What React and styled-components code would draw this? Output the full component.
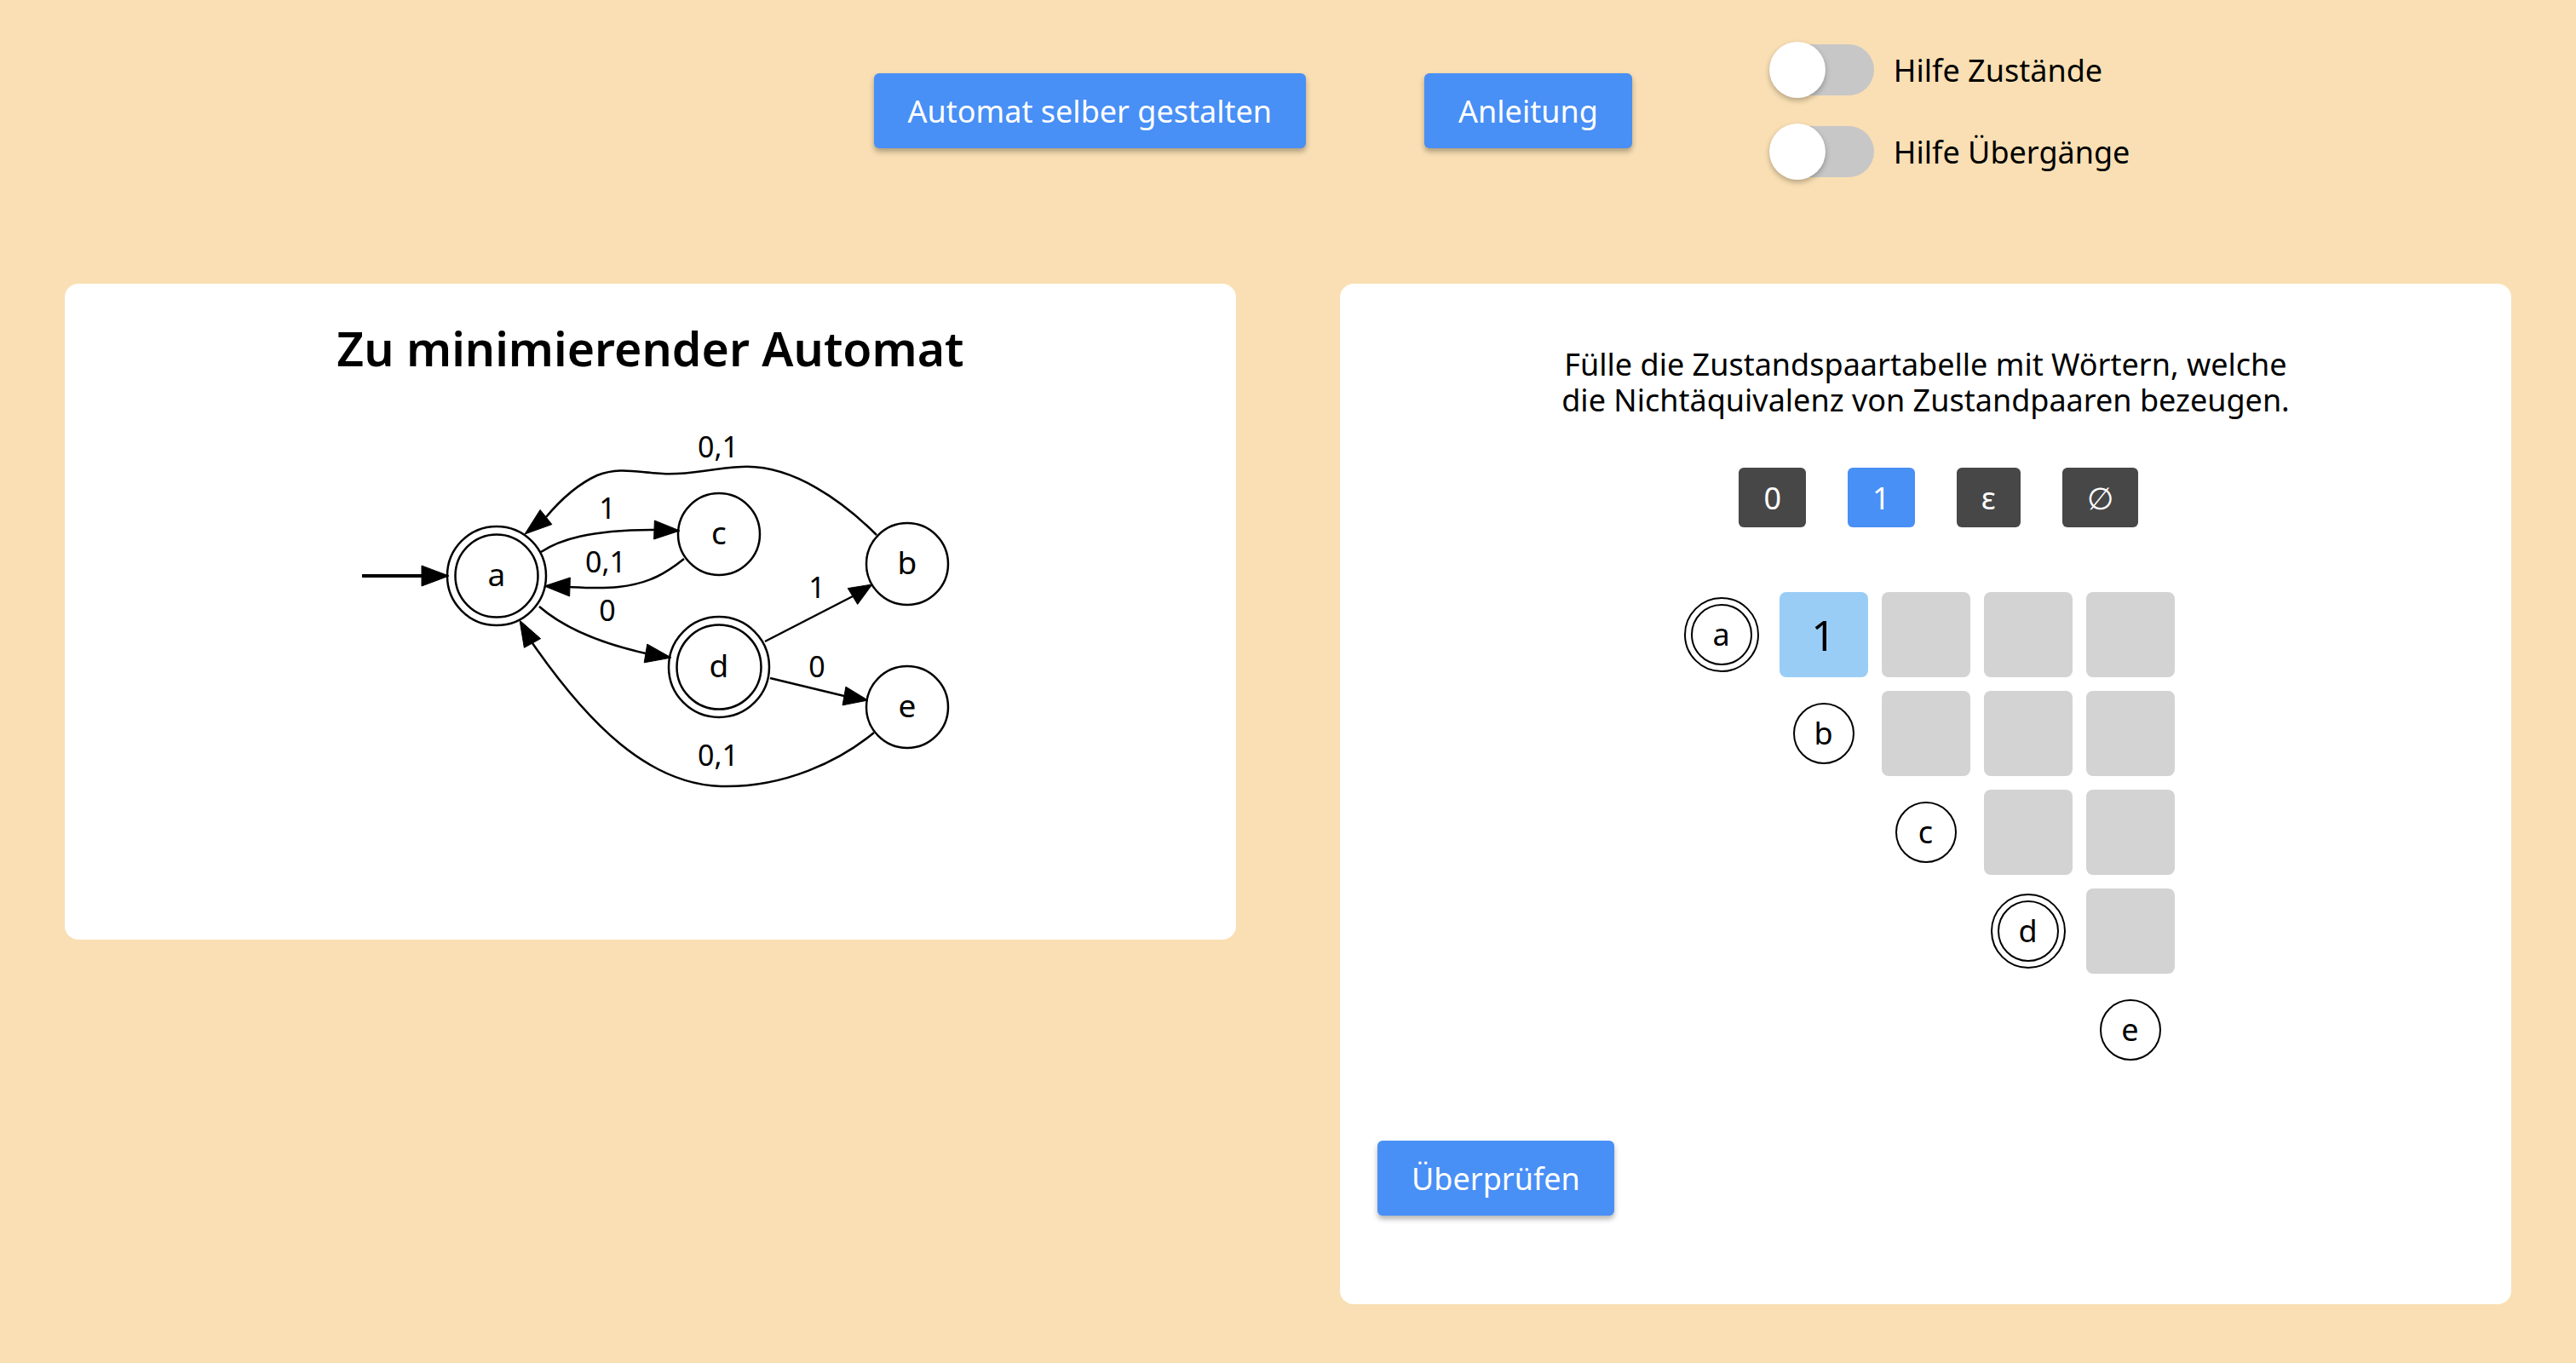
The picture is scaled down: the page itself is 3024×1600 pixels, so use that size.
import React from "react";
import styled, { createGlobalStyle } from "styled-components";

const GlobalStyle = createGlobalStyle`
  html, body {
    margin: 0;
    padding: 0;
  }
  body {
    background-color: #f9dfb3;
    font-family: "Noto Sans", "Open Sans", sans-serif;
    color: #000;
  }
`;

// graph data, page coordinates (the svg viewBox uses the same space)
const nodes = [
  { id: "a", x: 582, y: 676, r: 58, accept: true },
  { id: "c", x: 843, y: 627, r: 48 },
  { id: "b", x: 1064, y: 662, r: 48 },
  { id: "d", x: 843, y: 783, r: 59, accept: true },
  { id: "e", x: 1064, y: 830, r: 48 },
];

const edges = [
  {
    d: "M1028,628 C990,590 930,545 870,548 C830,550 808,558 777,556 C745,554 725,548 700,558 C678,568 656,588 640,607",
    base: [640, 607],
    tip: [615, 627],
  },
  { d: "M634,648 C655,634 690,622 767,622", base: [767, 622], tip: [797, 623] },
  {
    d: "M802,656 C782,672 762,685 725,689 C705,691 688,690 668,689",
    base: [668, 689],
    tip: [638, 688],
  },
  { d: "M632,712 C655,732 690,752 757,767", base: [757, 767], tip: [787, 772] },
  { d: "M897,753 L1000,700", base: [1000, 700], tip: [1023, 686] },
  { d: "M903,796 L990,817", base: [990, 817], tip: [1018, 822] },
  {
    d: "M1025,860 C985,893 920,925 845,923 C760,920 690,850 624,755",
    base: [624, 755],
    tip: [609, 728],
  },
];

const edgeLabels = [
  { t: "0,1", x: 842, y: 525 },
  { t: "1", x: 712, y: 597 },
  { t: "0,1", x: 710, y: 660 },
  { t: "0", x: 712, y: 717 },
  { t: "1", x: 958, y: 690 },
  { t: "0", x: 958, y: 783 },
  { t: "0,1", x: 842, y: 887 },
];

const arrowHead = ([bx, by], [tx, ty], hw = 11) => {
  const dx = tx - bx;
  const dy = ty - by;
  const l = Math.hypot(dx, dy);
  const nx = (-dy / l) * hw;
  const ny = (dx / l) * hw;
  return `${tx},${ty} ${bx + nx},${by + ny} ${bx - nx},${by - ny}`;
};

const states = [
  { id: "a", accept: true },
  { id: "b" },
  { id: "c" },
  { id: "d", accept: true },
  { id: "e" },
];

export default function App() {
  return (
    <>
      <GlobalStyle />
      <Page>
        <TopBar>
          <PrimaryButton $spaceAfter={139}>Automat selber gestalten</PrimaryButton>
          <PrimaryButton $spaceAfter={161}>Anleitung</PrimaryButton>
          <ToggleList>
            <ToggleRow>
              <Switch>
                <Track />
                <Knob />
              </Switch>
              Hilfe Zustände
            </ToggleRow>
            <ToggleRow>
              <Switch>
                <Track />
                <Knob />
              </Switch>
              Hilfe Übergänge
            </ToggleRow>
          </ToggleList>
        </TopBar>

        <Main>
          <GraphCard>
            <Title>Zu minimierender Automat</Title>
            <Graph width="730" height="450" viewBox="398 490 730 450">
              <line x1="424" y1="676" x2="496" y2="676" strokeWidth="4" />
              <polygon points={arrowHead([494, 676], [526, 676], 12)} />
              {edges.map((e, i) => (
                <g key={i}>
                  <path d={e.d} fill="none" />
                  <polygon points={arrowHead(e.base, e.tip)} />
                </g>
              ))}
              {nodes.map((n) => (
                <g key={n.id}>
                  <circle cx={n.x} cy={n.y} r={n.r} fill="none" />
                  {n.accept && <circle cx={n.x} cy={n.y} r={n.r - 9.5} fill="none" />}
                  <text className="node" x={n.x} y={n.y + 12}>
                    {n.id}
                  </text>
                </g>
              ))}
              {edgeLabels.map((l, i) => (
                <text key={i} className="edge" x={l.x} y={l.y + 12}>
                  {l.t}
                </text>
              ))}
            </Graph>
          </GraphCard>

          <TableCard>
            <Instruction>
              Fülle die Zustandspaartabelle mit Wörtern, welche
              <br />
              die Nichtäquivalenz von Zustandpaaren bezeugen.
            </Instruction>
            <SymbolBar>
              <SymbolButton>0</SymbolButton>
              <SymbolButton $active>1</SymbolButton>
              <SymbolButton>ε</SymbolButton>
              <SymbolButton>∅</SymbolButton>
            </SymbolBar>
            <PairGrid>
              {states.map((s, i) => (
                <React.Fragment key={s.id}>
                  <StateLabel $col={i + 1}>
                    {s.accept ? (
                      <Ring $size={88}>
                        <Ring $size={72}>{s.id}</Ring>
                      </Ring>
                    ) : (
                      <Ring $size={72}>{s.id}</Ring>
                    )}
                  </StateLabel>
                  {states.slice(i + 1).map((t, j) => (
                    <PairCell key={t.id} $col={i + j + 2} $filled={i === 0 && j === 0}>
                      {i === 0 && j === 0 ? "1" : ""}
                    </PairCell>
                  ))}
                </React.Fragment>
              ))}
            </PairGrid>
            <CheckButton>Überprüfen</CheckButton>
          </TableCard>
        </Main>
      </Page>
    </>
  );
}

const Page = styled.div`
  box-sizing: border-box;
  min-height: 1600px;
  padding: 49px 76px 0;
  display: flex;
  flex-direction: column;
  gap: 122px;
`;

const TopBar = styled.div`
  display: flex;
  align-items: center;
  justify-content: center;
  padding-left: 502px;
`;

const PrimaryButton = styled.button`
  height: 88px;
  padding: 0 40px;
  margin-right: ${(p) => p.$spaceAfter ?? 0}px;
  border: none;
  border-radius: 6px;
  background-color: #488ff6;
  color: #fff;
  font-family: inherit;
  font-size: 36px;
  white-space: nowrap;
  box-shadow: 0 4px 6px rgba(0, 0, 0, 0.3);
  cursor: pointer;
`;

const ToggleList = styled.div`
  display: flex;
  flex-direction: column;
  gap: 30px;
`;

const ToggleRow = styled.label`
  display: flex;
  align-items: center;
  gap: 23px;
  font-size: 36px;
  white-space: nowrap;
`;

const Switch = styled.span`
  position: relative;
  display: block;
  flex-shrink: 0;
  width: 123px;
  height: 66px;
`;

const Track = styled.span`
  position: absolute;
  left: 2px;
  right: 0;
  top: 3px;
  height: 60px;
  border-radius: 30px;
  background-color: #c7c7c7;
`;

const Knob = styled.span`
  position: absolute;
  left: 0;
  top: 0;
  width: 66px;
  height: 66px;
  border-radius: 50%;
  background-color: #fff;
  box-shadow: 0 3px 6px rgba(0, 0, 0, 0.28);
`;

const Main = styled.div`
  display: grid;
  grid-template-columns: 1fr 1fr;
  column-gap: 122px;
  align-items: start;
`;

const Card = styled.section`
  box-sizing: border-box;
  background-color: #fff;
  border-radius: 16px;
  display: flex;
  flex-direction: column;
  align-items: center;
`;

const GraphCard = styled(Card)`
  height: 770px;
  padding-top: 38px;
`;

const Title = styled.h2`
  margin: 0;
  font-size: 55.4px;
  line-height: 76px;
  font-weight: 600;
`;

const Graph = styled.svg`
  display: block;
  margin-top: 43px;
  stroke: #000;
  stroke-width: 2.5;

  polygon {
    fill: #000;
    stroke-width: 1;
  }

  text {
    stroke: none;
    fill: #000;
    font-family: "Noto Sans", sans-serif;
    text-anchor: middle;
  }

  .node {
    font-size: 37px;
  }

  .edge {
    font-size: 34px;
  }
`;

const TableCard = styled(Card)`
  padding: 74px 44px 104px;
`;

const Instruction = styled.p`
  margin: 0;
  font-size: 36px;
  line-height: 42px;
  text-align: center;
`;

const SymbolBar = styled.div`
  display: flex;
  gap: 49px;
  margin-top: 58px;
  padding-left: 30px;
`;

const SymbolButton = styled.button`
  height: 70px;
  padding: 0 29px;
  border: none;
  border-radius: 6px;
  background-color: ${(p) => (p.$active ? "#488ff6" : "#474747")};
  color: #fff;
  font-family: inherit;
  font-size: 36px;
  cursor: pointer;
`;

const PairGrid = styled.div`
  margin-top: 76px;
  display: grid;
  grid-template-columns: repeat(5, 104px);
  grid-auto-rows: 100px;
  gap: 16px;
`;

const StateLabel = styled.div`
  grid-column: ${(p) => p.$col};
  display: flex;
  align-items: center;
  justify-content: center;
`;

const Ring = styled.div`
  box-sizing: border-box;
  width: ${(p) => p.$size}px;
  height: ${(p) => p.$size}px;
  border: 2px solid #000;
  border-radius: 50%;
  display: flex;
  align-items: center;
  justify-content: center;
  font-size: 36px;
  line-height: 1;
`;

const PairCell = styled.div`
  grid-column: ${(p) => p.$col};
  border-radius: 8px;
  background-color: ${(p) => (p.$filled ? "#9acdf5" : "#d3d3d3")};
  display: flex;
  align-items: center;
  justify-content: center;
  font-size: 50px;
`;

const CheckButton = styled(PrimaryButton)`
  align-self: flex-start;
  margin-top: 80px;
`;
